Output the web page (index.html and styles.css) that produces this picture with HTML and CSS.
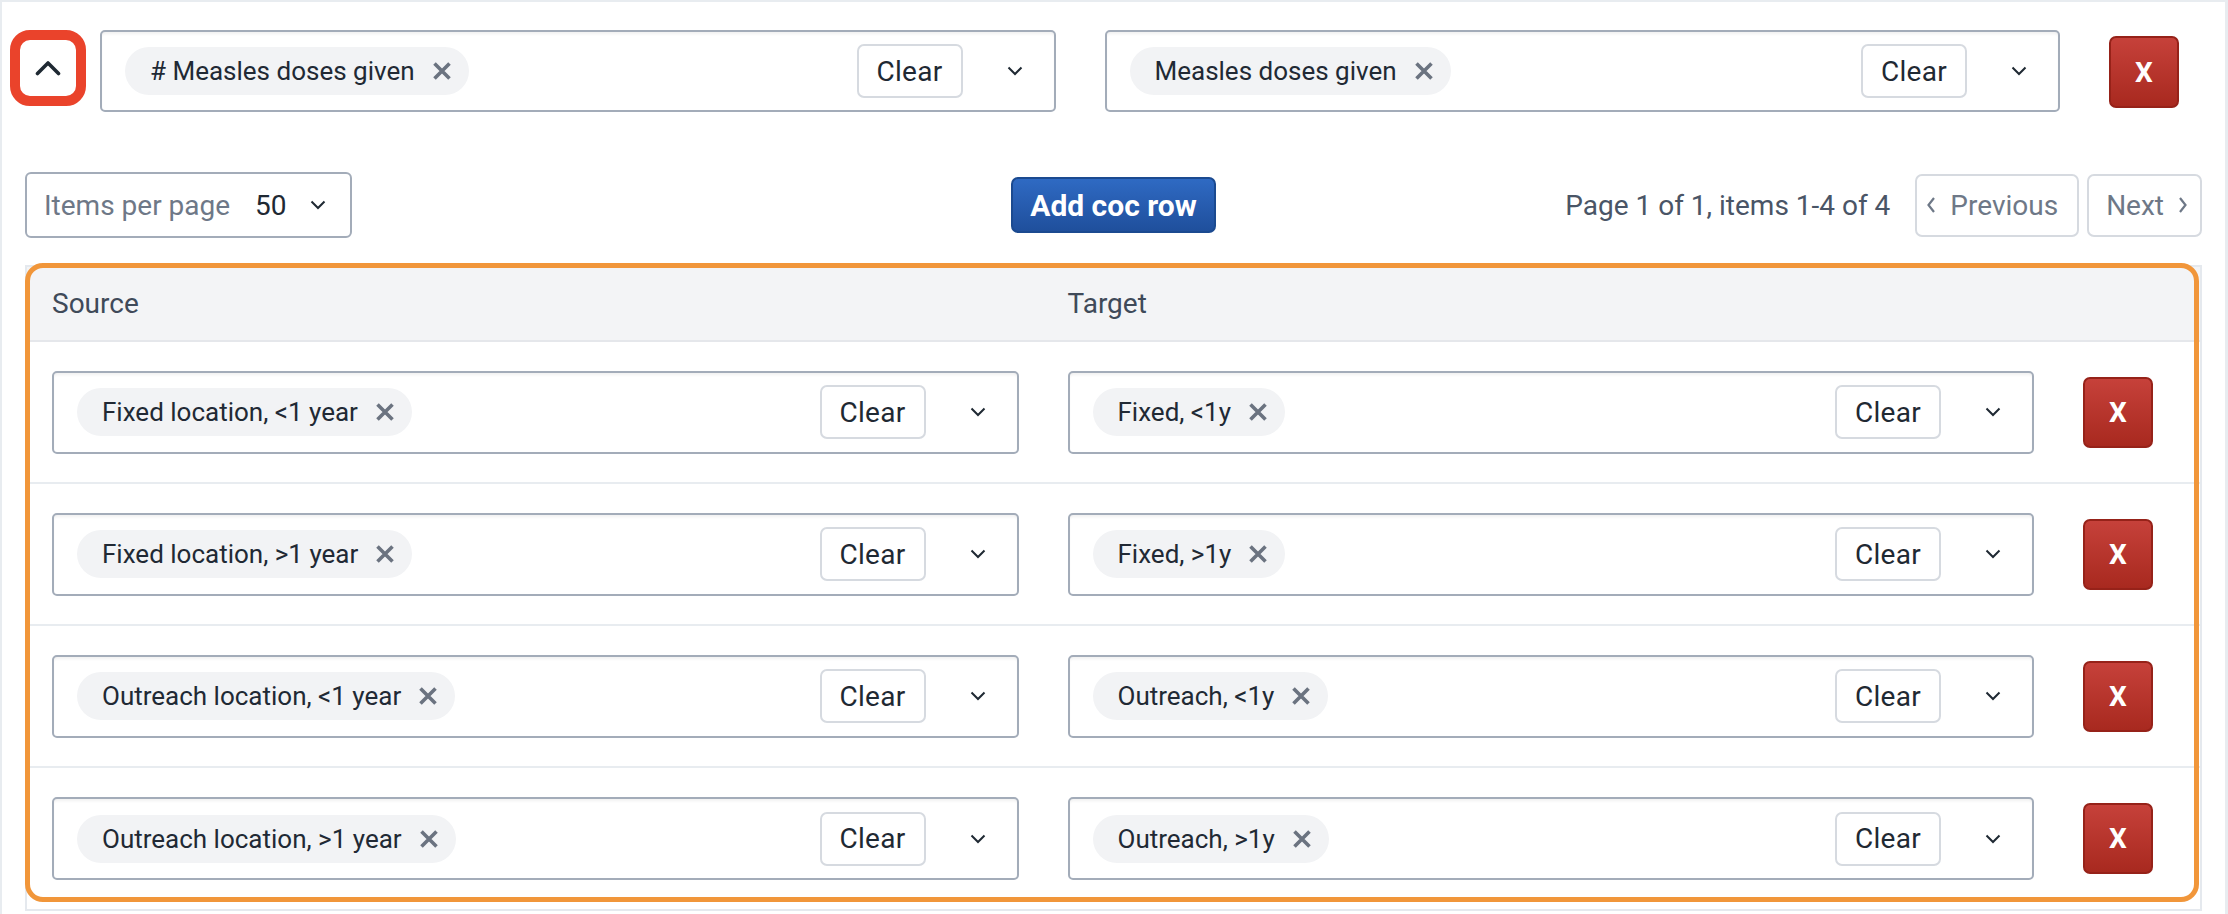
FILE: index.html
```html
<!DOCTYPE html>
<html lang="en">
<head>
<meta charset="utf-8">
<title>COC mapping</title>
<link rel="stylesheet" href="styles.css">
</head>
<body>
<div class="page">
  <div class="top-row">
    <button class="toggle" type="button" aria-label="Collapse">
      <svg class="chev-up" viewBox="0 0 26 16" width="26" height="16"><path d="M2.5 13.5 L13 3 L23.5 13.5" fill="none" stroke="currentColor" stroke-width="3.6" stroke-linecap="round" stroke-linejoin="round"/></svg>
    </button>
    <div class="select">
      <span class="chip">
        <span class="chip-label"># Measles doses given</span>
        <svg class="chip-x" viewBox="0 0 20 20" width="20" height="20"><path d="M2.5 2.5 L17.5 17.5 M17.5 2.5 L2.5 17.5" fill="none" stroke="currentColor" stroke-width="3.6"/></svg>
      </span>
      <span class="spacer"></span>
      <span class="clear">Clear</span>
      <span class="chev-wrap"><svg class="chev-down" viewBox="0 0 16 10" width="16" height="10"><path d="M1.5 1.5 L8 8 L14.5 1.5" fill="none" stroke="currentColor" stroke-width="2"/></svg></span>
    </div>
    <div class="select">
      <span class="chip">
        <span class="chip-label">Measles doses given</span>
        <svg class="chip-x" viewBox="0 0 20 20" width="20" height="20"><path d="M2.5 2.5 L17.5 17.5 M17.5 2.5 L2.5 17.5" fill="none" stroke="currentColor" stroke-width="3.6"/></svg>
      </span>
      <span class="spacer"></span>
      <span class="clear">Clear</span>
      <span class="chev-wrap"><svg class="chev-down" viewBox="0 0 16 10" width="16" height="10"><path d="M1.5 1.5 L8 8 L14.5 1.5" fill="none" stroke="currentColor" stroke-width="2"/></svg></span>
    </div>
    <button class="remove remove-top" type="button">X</button>
  </div>

  <div class="toolbar">
    <div class="ipp">
      <span class="ipp-label">Items per page</span>
      <span class="ipp-value">50</span>
      <svg class="chev-down" viewBox="0 0 16 10" width="16" height="10"><path d="M1.5 1.5 L8 8 L14.5 1.5" fill="none" stroke="currentColor" stroke-width="2"/></svg>
    </div>
    <button class="primary" type="button">Add coc row</button>
    <div class="pager">
      <span class="pager-text">Page 1 of 1, items 1-4 of 4</span>
      <button class="pbtn prev" type="button"><svg viewBox="0 0 10 18" width="10" height="18"><path d="M8 2 L2.5 9 L8 16" fill="none" stroke="currentColor" stroke-width="2.2"/></svg>Previous</button>
      <button class="pbtn next" type="button">Next<svg viewBox="0 0 10 18" width="10" height="18"><path d="M2 2 L7.5 9 L2 16" fill="none" stroke="currentColor" stroke-width="2.2"/></svg></button>
    </div>
  </div>

  <div class="table-wrap">
    <div class="table">
      <div class="thead">
        <div class="th">Source</div>
        <div class="th">Target</div>
        <div class="th"></div>
      </div>

      <div class="tr">
        <div class="td"><div class="select"><span class="chip"><span class="chip-label">Fixed location, &lt;1 year</span><svg class="chip-x" viewBox="0 0 20 20" width="20" height="20"><path d="M2.5 2.5 L17.5 17.5 M17.5 2.5 L2.5 17.5" fill="none" stroke="currentColor" stroke-width="3.6"/></svg></span><span class="spacer"></span><span class="clear">Clear</span><span class="chev-wrap"><svg class="chev-down" viewBox="0 0 16 10" width="16" height="10"><path d="M1.5 1.5 L8 8 L14.5 1.5" fill="none" stroke="currentColor" stroke-width="2"/></svg></span></div></div>
        <div class="td"><div class="select"><span class="chip"><span class="chip-label">Fixed, &lt;1y</span><svg class="chip-x" viewBox="0 0 20 20" width="20" height="20"><path d="M2.5 2.5 L17.5 17.5 M17.5 2.5 L2.5 17.5" fill="none" stroke="currentColor" stroke-width="3.6"/></svg></span><span class="spacer"></span><span class="clear">Clear</span><span class="chev-wrap"><svg class="chev-down" viewBox="0 0 16 10" width="16" height="10"><path d="M1.5 1.5 L8 8 L14.5 1.5" fill="none" stroke="currentColor" stroke-width="2"/></svg></span></div></div>
        <div class="td td-action"><button class="remove" type="button">X</button></div>
      </div>

      <div class="tr">
        <div class="td"><div class="select"><span class="chip"><span class="chip-label">Fixed location, &gt;1 year</span><svg class="chip-x" viewBox="0 0 20 20" width="20" height="20"><path d="M2.5 2.5 L17.5 17.5 M17.5 2.5 L2.5 17.5" fill="none" stroke="currentColor" stroke-width="3.6"/></svg></span><span class="spacer"></span><span class="clear">Clear</span><span class="chev-wrap"><svg class="chev-down" viewBox="0 0 16 10" width="16" height="10"><path d="M1.5 1.5 L8 8 L14.5 1.5" fill="none" stroke="currentColor" stroke-width="2"/></svg></span></div></div>
        <div class="td"><div class="select"><span class="chip"><span class="chip-label">Fixed, &gt;1y</span><svg class="chip-x" viewBox="0 0 20 20" width="20" height="20"><path d="M2.5 2.5 L17.5 17.5 M17.5 2.5 L2.5 17.5" fill="none" stroke="currentColor" stroke-width="3.6"/></svg></span><span class="spacer"></span><span class="clear">Clear</span><span class="chev-wrap"><svg class="chev-down" viewBox="0 0 16 10" width="16" height="10"><path d="M1.5 1.5 L8 8 L14.5 1.5" fill="none" stroke="currentColor" stroke-width="2"/></svg></span></div></div>
        <div class="td td-action"><button class="remove" type="button">X</button></div>
      </div>

      <div class="tr">
        <div class="td"><div class="select"><span class="chip"><span class="chip-label">Outreach location, &lt;1 year</span><svg class="chip-x" viewBox="0 0 20 20" width="20" height="20"><path d="M2.5 2.5 L17.5 17.5 M17.5 2.5 L2.5 17.5" fill="none" stroke="currentColor" stroke-width="3.6"/></svg></span><span class="spacer"></span><span class="clear">Clear</span><span class="chev-wrap"><svg class="chev-down" viewBox="0 0 16 10" width="16" height="10"><path d="M1.5 1.5 L8 8 L14.5 1.5" fill="none" stroke="currentColor" stroke-width="2"/></svg></span></div></div>
        <div class="td"><div class="select"><span class="chip"><span class="chip-label">Outreach, &lt;1y</span><svg class="chip-x" viewBox="0 0 20 20" width="20" height="20"><path d="M2.5 2.5 L17.5 17.5 M17.5 2.5 L2.5 17.5" fill="none" stroke="currentColor" stroke-width="3.6"/></svg></span><span class="spacer"></span><span class="clear">Clear</span><span class="chev-wrap"><svg class="chev-down" viewBox="0 0 16 10" width="16" height="10"><path d="M1.5 1.5 L8 8 L14.5 1.5" fill="none" stroke="currentColor" stroke-width="2"/></svg></span></div></div>
        <div class="td td-action"><button class="remove" type="button">X</button></div>
      </div>

      <div class="tr">
        <div class="td"><div class="select"><span class="chip"><span class="chip-label">Outreach location, &gt;1 year</span><svg class="chip-x" viewBox="0 0 20 20" width="20" height="20"><path d="M2.5 2.5 L17.5 17.5 M17.5 2.5 L2.5 17.5" fill="none" stroke="currentColor" stroke-width="3.6"/></svg></span><span class="spacer"></span><span class="clear">Clear</span><span class="chev-wrap"><svg class="chev-down" viewBox="0 0 16 10" width="16" height="10"><path d="M1.5 1.5 L8 8 L14.5 1.5" fill="none" stroke="currentColor" stroke-width="2"/></svg></span></div></div>
        <div class="td"><div class="select"><span class="chip"><span class="chip-label">Outreach, &gt;1y</span><svg class="chip-x" viewBox="0 0 20 20" width="20" height="20"><path d="M2.5 2.5 L17.5 17.5 M17.5 2.5 L2.5 17.5" fill="none" stroke="currentColor" stroke-width="3.6"/></svg></span><span class="spacer"></span><span class="clear">Clear</span><span class="chev-wrap"><svg class="chev-down" viewBox="0 0 16 10" width="16" height="10"><path d="M1.5 1.5 L8 8 L14.5 1.5" fill="none" stroke="currentColor" stroke-width="2"/></svg></span></div></div>
        <div class="td td-action"><button class="remove" type="button">X</button></div>
      </div>
    </div>
    <div class="highlight"></div>
  </div>
</div>
</body>
</html>
```

FILE: styles.css
```css
* { box-sizing: border-box; }

html, body {
  margin: 0;
  padding: 0;
  background: #ffffff;
}

body {
  font-family: Roboto, "Liberation Sans", sans-serif;
  font-size: 28px;
  color: #1f2933;
  width: 2228px;
  height: 914px;
  overflow: hidden;
}

button {
  font-family: inherit;
  cursor: pointer;
}

.page {
  height: 914px;
  border-top: 2px solid #e8ecf0;
  border-left: 2px solid #e8ecf0;
  border-right: 3px solid #e8ecf0;
}

/* ---------- top row ---------- */
.top-row {
  display: flex;
  align-items: flex-start;
  margin-top: 28px;
  padding: 0 46px 0 8px;
}

.toggle {
  width: 76px;
  height: 76px;
  margin-right: 14px;
  border: 10px solid #ea432b;
  border-radius: 20px;
  background: #ffffff;
  padding: 0;
  display: flex;
  align-items: center;
  justify-content: center;
  color: #1f2933;
}

.top-row .select {
  flex: 1 1 0;
  min-width: 0;
}

.top-row .select + .select {
  margin-left: 49px;
}

.remove-top {
  margin-left: 49px;
  margin-top: 6px;
  height: 72px !important;
}

/* ---------- select ---------- */
.select {
  display: flex;
  align-items: center;
  height: 82px;
  border: 2px solid #a3acb9;
  border-radius: 5px;
  background: #ffffff;
  box-shadow: inset 0 3px 3px -1px rgba(0, 0, 0, 0.06);
  padding-left: 23px;
}

.chip {
  display: inline-flex;
  align-items: center;
  height: 48px;
  padding: 0 17px 0 25px;
  border-radius: 24px;
  background: #f2f3f5;
  font-size: 26px;
  color: #212934;
  white-space: nowrap;
}

.chip-x {
  margin-left: 17px;
  color: #6b7380;
  flex: none;
  display: block;
}

.spacer { flex: 1 1 auto; }

.clear {
  display: inline-flex;
  align-items: center;
  justify-content: center;
  width: 106px;
  height: 54px;
  border: 2px solid #d6dae0;
  border-radius: 7px;
  font-size: 28px;
  color: #1f2933;
  letter-spacing: 0.3px;
}

.chev-wrap {
  display: inline-flex;
  align-items: center;
  padding: 0 31px 0 44px;
  color: #1f2933;
}

.chev-down { display: block; flex: none; }

/* ---------- remove button ---------- */
.remove {
  width: 70px;
  height: 71px;
  flex: none;
  padding: 0;
  border: 2px solid #962219;
  border-radius: 7px;
  background: linear-gradient(#c6413a, #a8291f);
  color: #ffffff;
  font-size: 28px;
  font-weight: 700;
}

/* ---------- toolbar ---------- */
.toolbar {
  display: grid;
  grid-template-columns: 1fr auto 1fr;
  align-items: center;
  margin: 60px 23px 0 23px;
  height: 66px;
}

.ipp {
  justify-self: start;
  display: flex;
  align-items: center;
  height: 66px;
  padding: 0 24px 0 17px;
  border: 2px solid #a3acb9;
  border-radius: 6px;
  color: #1f2933;
  white-space: nowrap;
}

.ipp-label {
  color: #6e7887;
}

.ipp-value {
  margin-left: 25px;
  color: #1f2933;
}

.ipp .chev-down {
  margin-left: 23px;
}

.primary {
  height: 56px;
  padding: 0 17px;
  border: 2px solid #1b4a90;
  border-radius: 7px;
  background: linear-gradient(#2f6ac3, #1f4f9c);
  color: #ffffff;
  font-size: 30px;
  font-weight: 700;
}

.pager {
  justify-self: end;
  display: flex;
  align-items: center;
  white-space: nowrap;
}

.pager-text {
  color: #4a5566;
  margin-right: 25px;
}

.pbtn {
  display: inline-flex;
  align-items: center;
  height: 63px;
  border: 2px solid #d6dae0;
  border-radius: 7px;
  background: #ffffff;
  color: #6e7887;
  font-size: 28px;
}

.pbtn svg { flex: none; }

.prev {
  padding: 0 19px 0 9px;
}

.prev svg { margin-right: 14px; }

.next {
  margin-left: 8px;
  padding: 0 12px 0 17px;
}

.next svg { margin-left: 14px; }

/* ---------- table ---------- */
.table-wrap {
  position: relative;
  margin: 27px 23px 0 23px;
}

.table {
  border: 2px solid #e5e9ee;
}

.thead,
.tr {
  display: grid;
  grid-template-columns: 1fr 1fr 142px;
}

.thead {
  height: 75px;
  background: #f3f4f6;
  border-bottom: 2px solid #e5e7eb;
  align-items: center;
}

.th {
  padding: 0 24px 0 25px;
  color: #3f4a59;
}

.tr {
  height: 142px;
  align-items: center;
  border-bottom: 2px solid #e8ecf0;
}

.tr:last-child {
  border-bottom: none;
  height: 141px;
}

.td {
  padding: 0 24px 0 25px;
}

.tr .select {
  height: 83px;
}

.td-action {
  display: flex;
  align-items: center;
}

.highlight {
  position: absolute;
  top: -2px;
  left: 0;
  right: 3px;
  bottom: 9px;
  border: 5px solid #f1963a;
  border-radius: 18px;
  pointer-events: none;
}
```
